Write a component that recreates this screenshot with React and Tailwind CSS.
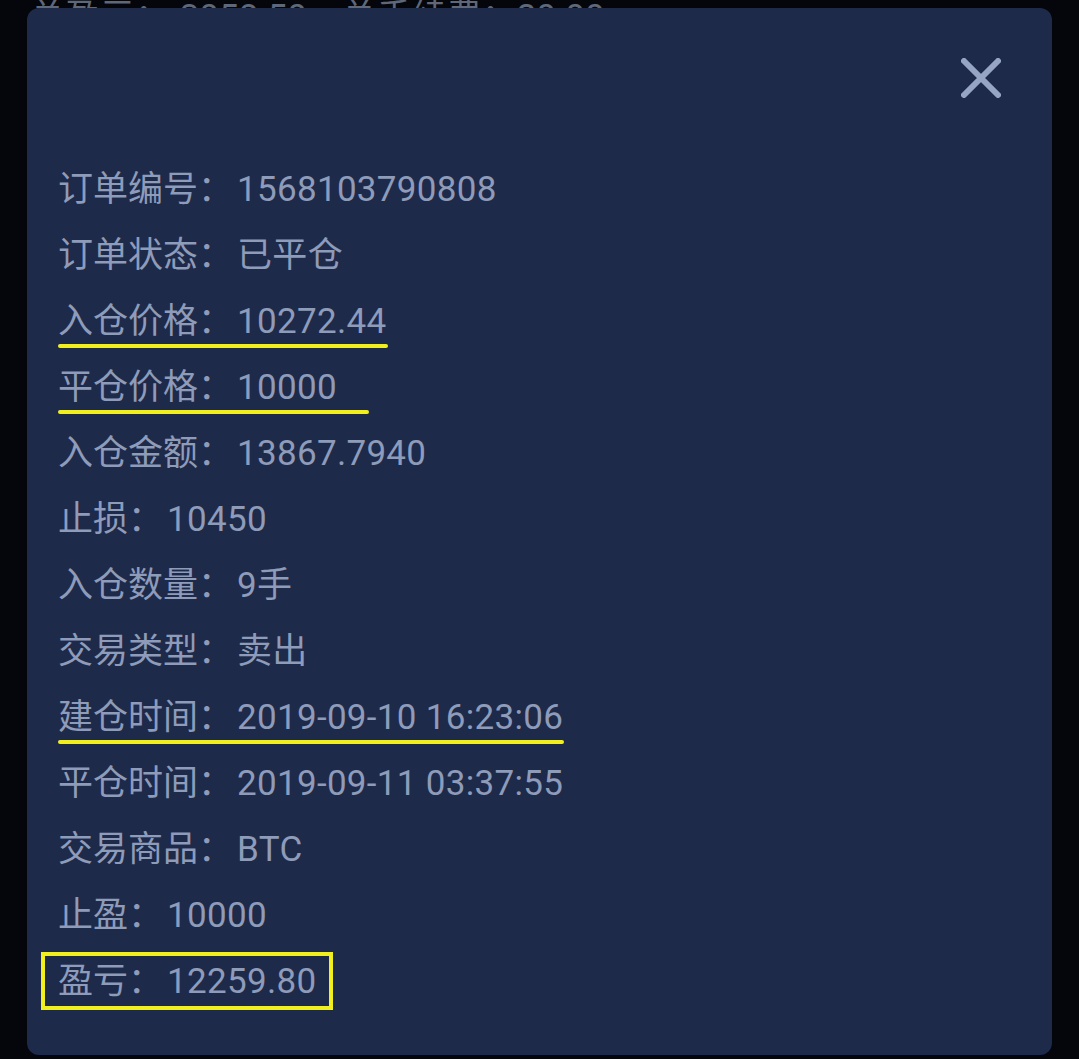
import React from 'react';

const rows = [
  { label: '订单编号', value: '1568103790808' },
  { label: '订单状态', value: '已平仓' },
  { label: '入仓价格', value: '10272.44', line: 'w-[330px]' },
  { label: '平仓价格', value: '10000', line: 'w-[311px]' },
  { label: '入仓金额', value: '13867.7940' },
  { label: '止损', value: '10450' },
  { label: '入仓数量', value: '9手' },
  { label: '交易类型', value: '卖出' },
  { label: '建仓时间', value: '2019-09-10 16:23:06', line: 'w-[506px]' },
  { label: '平仓时间', value: '2019-09-11 03:37:55' },
  { label: '交易商品', value: 'BTC' },
  { label: '止盈', value: '10000' },
  { label: '盈亏', value: '12259.80', boxed: true },
];

const CloseIcon = () => (
  <svg width="40" height="40" viewBox="0 0 40 40" fill="none">
    <path d="M3 3L37 37M37 3L3 37" stroke="#97a5c4" strokeWidth="6" strokeLinecap="round" />
  </svg>
);

const App = () => {
  return (
    <div
      className="w-[1079px] h-[1059px] bg-[#04060c] overflow-hidden flex flex-col"
      style={{ fontFamily: 'Roboto, "Noto Sans CJK SC", sans-serif' }}
    >
      {/* page behind the dialog, only its bottom edge shows */}
      <div className="h-[8px] overflow-hidden flex items-end px-[30px] shrink-0">
        <div className="text-[35px] leading-[40px] text-[#5f6878] whitespace-nowrap translate-y-[30px]">
          总盈亏：-3058.50&nbsp;&nbsp;&nbsp;&nbsp;总手续费：20.00
        </div>
      </div>

      {/* Dialog */}
      <div className="mx-[27px] h-[1047px] bg-[#1e2a4a] rounded-[12px] flex flex-col">
        <div className="flex justify-end items-center h-[44px] mt-[48px] pr-[51px]">
          <CloseIcon />
        </div>

        <div className="mt-[57px] pl-[31px] flex flex-col text-[#8e9bb9] text-[35px]">
          {rows.map((r) => (
            <div key={r.label} className="h-[66px] leading-[66px] relative whitespace-nowrap">
              <span>{r.label}：</span>
              <span className="ml-[4px] tracking-[0.3px]">{r.value}</span>
              {r.line && (
                <span className={`absolute left-0 top-[55px] h-[4px] rounded-full bg-[#f2ef1f] ${r.line}`} />
              )}
              {r.boxed && (
                <span className="absolute left-[-17px] top-[3px] w-[292px] h-[58px] border-[4px] border-[#f2ef1f]" />
              )}
            </div>
          ))}
        </div>
      </div>
    </div>
  );
};

export default App;
